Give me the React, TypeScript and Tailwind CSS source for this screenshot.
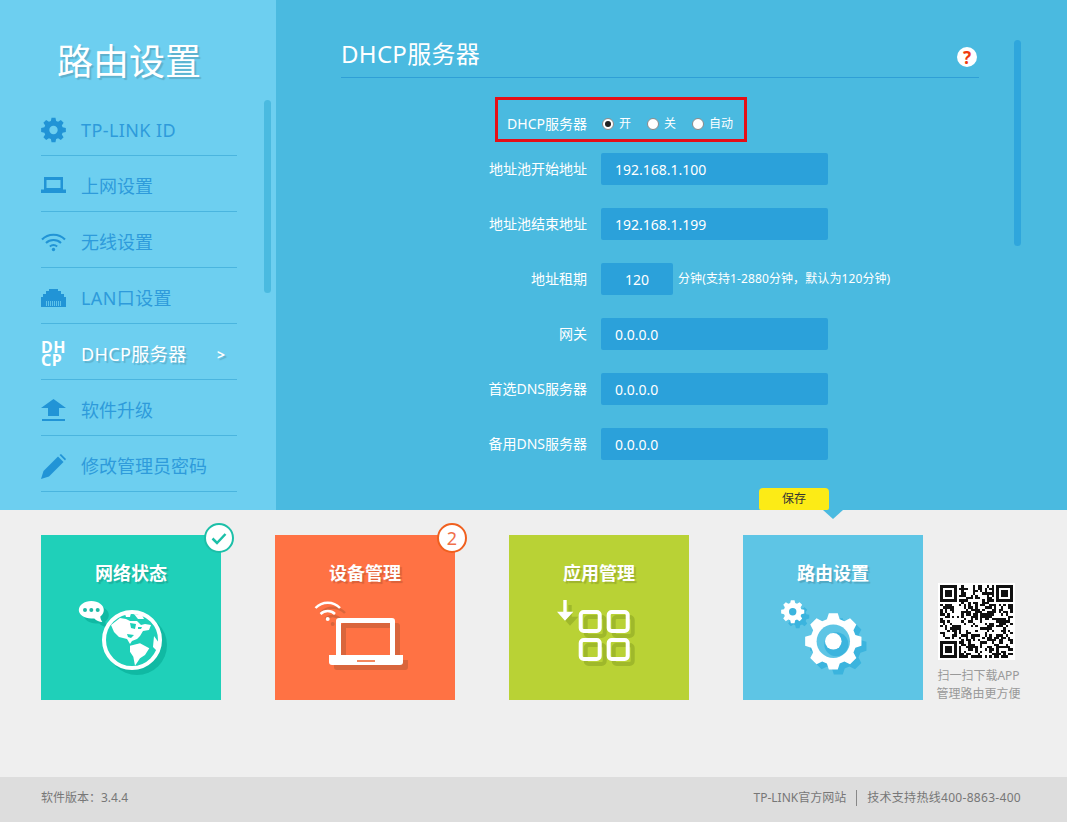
import type { ReactNode } from "react";

function gearPath(cx: number, cy: number, outer: number, inner: number, teeth: number) {
  const pts: string[] = [];
  const step = (Math.PI * 2) / teeth;
  for (let i = 0; i < teeth; i++) {
    const a = i * step - Math.PI / 2;
    const spots: [number, number][] = [
      [inner, a - step * 0.36],
      [outer, a - step * 0.2],
      [outer, a + step * 0.2],
      [inner, a + step * 0.36],
    ];
    for (const [r, t] of spots) {
      pts.push(`${(cx + r * Math.cos(t)).toFixed(2)} ${(cy + r * Math.sin(t)).toFixed(2)}`);
    }
  }
  return `M${pts.join("L")}Z`;
}

function qrPath() {
  const size = 31;
  const cells: boolean[][] = [];
  let seed = 20231;
  for (let y = 0; y < size; y++) {
    cells.push([]);
    for (let x = 0; x < size; x++) {
      seed = (seed * 1103515245 + 12345) & 0x7fffffff;
      cells[y].push(((seed >> 16) & 7) > 3);
    }
  }
  const finder = (ox: number, oy: number) => {
    for (let y = -1; y < 8; y++) {
      for (let x = -1; x < 8; x++) {
        const px = ox + x;
        const py = oy + y;
        if (px < 0 || py < 0 || px >= size || py >= size) continue;
        const ring = x >= 0 && x < 7 && y >= 0 && y < 7 && (x === 0 || x === 6 || y === 0 || y === 6);
        const core = x >= 2 && x <= 4 && y >= 2 && y <= 4;
        cells[py][px] = ring || core;
      }
    }
  };
  finder(0, 0);
  finder(size - 7, 0);
  finder(0, size - 7);
  let d = "";
  cells.forEach((row, y) =>
    row.forEach((on, x) => {
      if (on) d += `M${x} ${y}h1v1h-1z`;
    })
  );
  return d;
}

const navBlue = "#2194D6";

function GearIcon() {
  return (
    <svg width="25" height="26" viewBox="0 0 25 26">
      <path d={gearPath(12.5, 13, 12.5, 9.5, 8)} fill={navBlue} />
      <circle cx="12.5" cy="13" r="8.5" fill={navBlue} />
      <circle cx="12.5" cy="13" r="4.2" fill="#6DCFF0" />
    </svg>
  );
}

function LaptopIcon() {
  return (
    <svg width="25" height="20" viewBox="0 0 25 20">
      <path d="M3 1h19v13H3z M5.5 4v8h14V4z" fill={navBlue} fillRule="evenodd" />
      <path d="M0 13.500h25v3.500H0z" fill={navBlue} />
    </svg>
  );
}

function WifiIcon() {
  return (
    <svg width="25" height="20" viewBox="0 0 25 20" fill="none" stroke={navBlue} strokeWidth="2">
      <path d="M1 7.500C7 1 18 1 24 7.500" />
      <path d="M5 11C9 7 16 7 20 11" />
      <path d="M8.800 14.500C11 12.800 14 12.800 16.200 14.500" />
      <circle cx="12.500" cy="17.500" r="1.700" fill={navBlue} stroke="none" />
    </svg>
  );
}

function LanIcon() {
  return (
    <svg width="25" height="20" viewBox="0 0 25 20">
      <path d="M0 19V9h2V6h3V3h3V1h9v2h3v3h3v3h2v10z" fill={navBlue} />
      <path d="M5.500 13v5M7.500 13v5M9.500 13v5M11.500 13v5M13.500 13v5M15.500 13v5M17.500 13v5M19.500 13v5" stroke="#6DCFF0" strokeWidth="0.8" />
    </svg>
  );
}

function UploadIcon() {
  return (
    <svg width="25" height="23" viewBox="0 0 25 23">
      <path d="M12.500 0L25 9h-7v8H7V9H0z" fill={navBlue} />
      <path d="M1 20h23v2H1z" fill={navBlue} />
    </svg>
  );
}

function PencilIcon() {
  return (
    <svg width="25" height="25" viewBox="0 0 25 25">
      <path d="M0 25l2.500-8L17 2.500 22.500 8 8 22.500z" fill={navBlue} />
      <path d="M18.500 1L20 0l5 5-1 1.500z" fill={navBlue} />
    </svg>
  );
}

function DhcpIcon() {
  return (
    <div className="w-[25px] text-[16px] leading-[13px] font-bold text-white tracking-[0.5px]">
      DH
      <br />
      CP
    </div>
  );
}

function NavItem({ icon, label, active, wide }: { icon: ReactNode; label: string; active?: boolean; wide?: boolean }) {
  return (
    <div className="h-[56px] flex items-center pt-[5px] border-b border-[#4AB5DF]">
      <div className="w-[25px] mr-[15px] flex justify-center shrink-0">{icon}</div>
      <span
        className={
          (active
            ? "text-[18px] text-white [text-shadow:2px_2px_1px_rgba(0,0,0,0.15)]"
            : "text-[18px] text-[#2E9BDB]") + (wide ? " tracking-[0.4px]" : "")
        }
      >
        {label}
      </span>
      {active && (
        <span className="ml-auto mr-[12px] text-[14px] font-bold text-white [text-shadow:2px_2px_1px_rgba(0,0,0,0.15)]">
          &gt;
        </span>
      )}
    </div>
  );
}

function Sidebar() {
  return (
    <div className="relative w-[276px] h-full bg-[#6DCFF0] shrink-0">
      <h1 className="pl-[57px] pt-[38px] h-[100px] text-[36px] leading-[48px] font-normal text-white [text-shadow:2px_2px_1px_rgba(0,0,0,0.15)]">
        路由设置
      </h1>
      <div className="ml-[41px] w-[196px]">
        <NavItem icon={<GearIcon />} label="TP-LINK ID" wide />
        <NavItem icon={<LaptopIcon />} label="上网设置" />
        <NavItem icon={<WifiIcon />} label="无线设置" />
        <NavItem icon={<LanIcon />} label="LAN口设置" wide />
        <NavItem icon={<DhcpIcon />} label="DHCP服务器" active wide />
        <NavItem icon={<UploadIcon />} label="软件升级" />
        <NavItem icon={<PencilIcon />} label="修改管理员密码" />
      </div>
      <div className="absolute left-[264px] top-[100px] w-[7px] h-[193px] rounded-[4px] bg-[#4ABAE0]" />
    </div>
  );
}

function Radio({ label, checked }: { label: string; checked?: boolean }) {
  return (
    <div className="flex items-center w-[45px]">
      <span className="w-[12px] h-[12px] rounded-full bg-white border border-[#8a8a8a] flex items-center justify-center mr-[5px] shrink-0">
        {checked && <span className="w-[6px] h-[6px] rounded-full bg-[#222]" />}
      </span>
      <span className="text-[12px] text-white">{label}</span>
    </div>
  );
}

function Field({ label, value, hint, short }: { label: string; value: string; hint?: string; short?: boolean }) {
  return (
    <div className="flex items-center h-[32px] mb-[23px]">
      <div className="w-[311px] pb-[2px] text-right text-[14px] text-white">{label}</div>
      <div
        className={
          short
            ? "ml-[14px] w-[72px] h-[32px] rounded-[2px] bg-[#2BA1DA] flex items-center justify-center text-[14px] text-white"
            : "ml-[14px] w-[227px] h-[32px] rounded-[2px] bg-[#2BA1DA] flex items-center pl-[14px] text-[14px] text-white"
        }
      >
        {value}
      </div>
      {hint && <span className="ml-[5px] text-[12px] text-white whitespace-nowrap tracking-[0.1px]">{hint}</span>}
    </div>
  );
}

function Main() {
  return (
    <div className="relative flex-1 h-full bg-[#4ABAE0]">
      <div className="ml-[65px] w-[638px] h-[78px] pt-[38px] border-b border-[#2F9FD6] flex justify-between">
        <h2 className="text-[24px] leading-[32px] font-normal text-white tracking-[0.3px]">DHCP服务器</h2>
        <div className="w-[20px] h-[20px] mt-[9px] mr-[2px] rounded-full bg-white flex items-center justify-center text-[17px] leading-none font-bold text-[#F03A0E]">
          ?
        </div>
      </div>
      <div className="ml-[219px] mt-[19px] mb-[11px] w-[252px] h-[45px] pt-[8px] border-[3px] border-[#E60F17] flex items-center">
        <div className="w-[89px] text-right text-[14px] text-white whitespace-nowrap">DHCP服务器</div>
        <div className="ml-[15px] flex">
          <Radio label="开" checked />
          <Radio label="关" />
          <Radio label="自动" />
        </div>
      </div>
      <Field label="地址池开始地址" value="192.168.1.100" />
      <Field label="地址池结束地址" value="192.168.1.199" />
      <Field label="地址租期" value="120" short hint="分钟(支持1-2880分钟，默认为120分钟)" />
      <Field label="网关" value="0.0.0.0" />
      <Field label="首选DNS服务器" value="0.0.0.0" />
      <Field label="备用DNS服务器" value="0.0.0.0" />
      <div className="ml-[483px] mt-[28px] w-[70px] h-[22px] rounded-t-[4px] rounded-b-[2px] bg-[#FCEB16] flex items-center justify-center text-[12px] text-[#333]">
        保存
      </div>
      <div className="absolute left-[738px] top-[40px] w-[7px] h-[206px] rounded-[4px] bg-[#2FA6DC]" />
    </div>
  );
}

function GlobeArt() {
  const bubble = "M50.300 66c7 0 12.500 4 12.500 9 0 3-1.500 5-3.500 6.500 0 2 1 4 2 5.500-3 0-6-1.500-8-3.500h-3c-7 0-12.500-4-12.500-8.500 0-5 5.500-9 12.500-9Z";
  return (
    <svg width="180" height="112" viewBox="0 53 180 112">
      <g transform="translate(5 5)" fill="#10B9A3">
        <path d={bubble} />
        <circle cx="91" cy="105" r="30" />
      </g>
      <circle cx="91" cy="105" r="28" fill="#1FD0B9" stroke="#fff" strokeWidth="4" />
      <g fill="#fff">
        <path d="M70 90L79 83 85 84 89 86 96 86 100 90 104 89 110 90 108 95 102 96 99 101 96 104 91 106 89 109 86 104 78 102 73 97Z" />
        <path d="M89 110.700L99 108.300 108.300 113.300 104 120 99 123.300 94 130.700 92.300 121.700 89 116.700Z" />
        <path d="M113 101L118 108 116 116 112 112Z" />
        <path d="M84 79L90 78 89 82 85 82ZM93 79L101 80 103 84 97 84Z" />
      </g>
      <g fill="#1FD0B9">
        <path d="M89 88L95 89 94 94 90 93Z" />
        <path d="M97 92L101 92 100 94 97 94Z" />
        <path d="M86 99L93 100 90 103 87 102Z" />
      </g>
      <path d={bubble} fill="#fff" />
      <g fill="#1FB9A5">
        <circle cx="44" cy="75" r="2" />
        <circle cx="50.300" cy="75" r="2" />
        <circle cx="56.700" cy="75" r="2" />
      </g>
    </svg>
  );
}

function LaptopArt() {
  const screen = "M61 86a3 3 0 0 1 3-3h53a3 3 0 0 1 3 3v34h-5V88H66v32h-5z";
  const base = "M54 120h74v7a3 3 0 0 1-3 3H57a3 3 0 0 1-3-3z";
  const waves = (
    <>
      <path d="M40.500 73a17 17 0 0 1 24.500 0" />
      <path d="M45.500 79a10.500 10.500 0 0 1 14.500 0" />
    </>
  );
  return (
    <svg width="180" height="112" viewBox="0 53 180 112">
      <g transform="translate(5 5)" fill="#D9653C">
        <path d={screen} />
        <path d={base} />
        <g fill="none" stroke="#D9653C" strokeWidth="2.500">{waves}</g>
        <circle cx="52.700" cy="84" r="2" />
      </g>
      <path d={screen} fill="#fff" />
      <path d={base} fill="#fff" />
      <rect x="82" y="125" width="18" height="2" fill="#F4885F" />
      <g fill="none" stroke="#fff" strokeWidth="2.500">{waves}</g>
      <circle cx="52.700" cy="84" r="2" fill="#fff" />
    </svg>
  );
}

function AppsArt() {
  const squares = [
    [71.7, 77],
    [99.7, 77],
    [71.7, 105],
    [99.7, 105],
  ];
  const arrow = "M54.300 65h3.400v11.700h6.600L56 85.700 48 76.700h6.300z";
  return (
    <svg width="180" height="112" viewBox="0 53 180 112">
      <g transform="translate(5 5)" fill="none" stroke="#9FB82B">
        <path d={arrow} stroke="none" fill="#9FB82B" />
        {squares.map(([x, y]) => (
          <rect key={`${x}-${y}`} x={x} y={y} width="19" height="19" rx="3" strokeWidth="4" />
        ))}
      </g>
      <path d={arrow} fill="#fff" />
      {squares.map(([x, y]) => (
        <rect key={`${x}-${y}`} x={x} y={y} width="19" height="19" rx="3" fill="none" stroke="#fff" strokeWidth="4" />
      ))}
    </svg>
  );
}

function GearsArt() {
  const big = gearPath(90.3, 106.3, 28.5, 23, 8);
  const small = gearPath(49.7, 76.7, 11.7, 9, 8);
  return (
    <svg width="180" height="112" viewBox="0 53 180 112">
      <g transform="translate(5 5)" fill="#3BB4DE">
        <path d={big} />
        <path d={small} />
      </g>
      <path d={big} fill="#fff" />
      <circle cx="90.300" cy="106.300" r="16.700" fill="#5EC5E5" />
      <circle cx="93.300" cy="109.300" r="12" fill="#3BB4DE" />
      <circle cx="90.300" cy="106.300" r="8.300" fill="#fff" />
      <path d={small} fill="#fff" />
      <circle cx="49.700" cy="76.700" r="3.700" fill="#3BB4DE" />
    </svg>
  );
}

function Card({ title, bg, art, children }: { title: string; bg: string; art: ReactNode; children?: ReactNode }) {
  return (
    <div className={`relative w-[180px] h-[165px] shrink-0 ${bg}`}>
      <div className="h-[53px] pt-[24px] text-center text-[18px] leading-[28px] font-bold text-white [text-shadow:2px_2px_1px_rgba(0,0,0,0.15)]">
        {title}
      </div>
      {art}
      {children}
    </div>
  );
}

function QrBlock() {
  return (
    <div className="ml-[13px] w-[85px] pt-[48px] flex flex-col items-center">
      <svg className="-ml-[4px]" width="77" height="77" viewBox="-1 -1 33 33" shapeRendering="crispEdges">
        <rect x="-1" y="-1" width="33" height="33" fill="#fff" />
        <path d={qrPath()} fill="#111" />
      </svg>
      <div className="mt-[7px] text-center text-[12px] leading-[18px] text-[#999] whitespace-nowrap">
        <div>扫一扫下载APP</div>
        <div>管理路由更方便</div>
      </div>
    </div>
  );
}

export default function App() {
  return (
    <div className="w-[1067px] h-[822px] flex flex-col font-['Noto_Sans','Noto_Sans_CJK_SC',sans-serif] overflow-hidden">
      <div className="flex h-[510px] shrink-0">
        <Sidebar />
        <Main />
      </div>

      <div className="h-[267px] bg-[#EFEFEF] pt-[25px] pl-[41px] flex shrink-0">
        <div className="flex gap-[54px]">
          <Card title="网络状态" bg="bg-[#1FD0B9]" art={<GlobeArt />}>
            <div className="absolute left-[163px] -top-[12px] w-[30px] h-[30px] rounded-full bg-white border-2 border-[#1CBFA8] flex items-center justify-center">
              <svg width="16" height="13" viewBox="0 0 16 13" fill="none" stroke="#1CBFA8" strokeWidth="2.500">
                <path d="M1.500 6.500L6 11 14.500 2" />
              </svg>
            </div>
          </Card>
          <Card title="设备管理" bg="bg-[#FF7244]" art={<LaptopArt />}>
            <div className="absolute left-[162px] -top-[12px] w-[30px] h-[30px] rounded-full bg-white border-2 border-[#F0601F] flex items-center justify-center text-[18px] leading-none text-[#F0704A]">
              2
            </div>
          </Card>
          <Card title="应用管理" bg="bg-[#B9D235]" art={<AppsArt />} />
          <Card title="路由设置" bg="bg-[#5EC5E5]" art={<GearsArt />}>
            <div className="absolute left-[80px] -top-[25px] w-0 h-0 border-x-[10px] border-t-[9px] border-x-transparent border-t-[#4ABAE0]" />
          </Card>
        </div>
        <QrBlock />
      </div>

      <div className="flex-1 bg-[#DDDDDD] pl-[41px] pr-[46px] pt-[12px] flex justify-between items-start text-[12px] leading-[18px] text-[#777]">
        <span>软件版本：3.4.4</span>
        <div className="flex items-center">
          <span>TP-LINK官方网站</span>
          <span className="mx-[10px] w-px h-[16px] bg-[#888]" />
          <span className="tracking-[0.3px]">技术支持热线400-8863-400</span>
        </div>
      </div>
    </div>
  );
}
